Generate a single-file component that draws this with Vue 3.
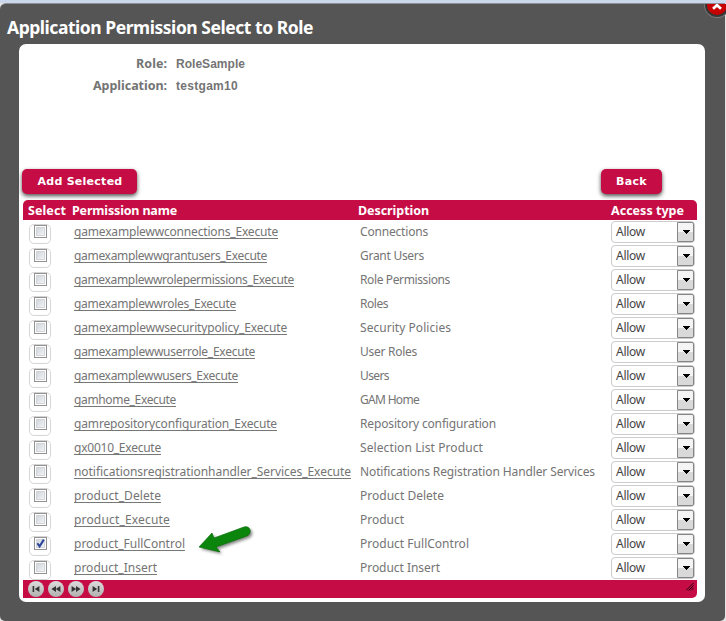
<script setup>
import { ref } from 'vue'

const raw = [
  ['gamexamplewwconnections_Execute', 204, 'Connections', 68],
  ['gamexamplewwgrantusers_Execute', 193, 'Grant Users', 64],
  ['gamexamplewwrolepermissions_Execute', 220, 'Role Permissions', 90],
  ['gamexamplewwroles_Execute', 162, 'Roles', 28],
  ['gamexamplewwsecuritypolicy_Execute', 213, 'Security Policies', 91],
  ['gamexamplewwuserrole_Execute', 181, 'User Roles', 57],
  ['gamexamplewwusers_Execute', 164, 'Users', 29],
  ['gamhome_Execute', 102, 'GAM Home', 59],
  ['gamrepositoryconfiguration_Execute', 203, 'Repository configuration', 136],
  ['gx0010_Execute', 87, 'Selection List Product', 123],
  ['notificationsregistrationhandler_Services_Execute', 277, 'Notifications Registration Handler Services', 235],
  ['product_Delete', 87, 'Product Delete', 84],
  ['product_Execute', 96, 'Product', 44],
  ['product_FullControl', 111, 'Product FullControl', 109],
  ['product_Insert', 83, 'Product Insert', 80],
]
const rows = ref(raw.map(([name, nameWidth, desc, descWidth], i) => ({
  name, nameWidth, desc, descWidth, checked: i === 13,
})))

// Tracks a label out (or in) so that it fills the given width.
const vFit = {
  mounted(el, { value }) {
    const natural = el.getBoundingClientRect().width
    el.style.letterSpacing = `${(value - natural) / el.textContent.length}px`
  },
}

const pager = [
  'M4.6 5h1.6v6H4.6z M11.4 5v6L6.8 8z',
  'M8 5v6L3.4 8z M12.4 5v6L7.8 8z',
  'M3.6 5v6L8.2 8z M8 5v6l4.6-3z',
  'M4.6 5v6l4.6-3z M9.8 5h1.6v6H9.8z',
]
</script>

<template>
  <div class="page">
    <div class="dialog">
      <h1><span v-fit="306">Application Permission Select to Role</span></h1>
      <div class="panel">
        <dl>
          <dt><span v-fit="31">Role:</span></dt>
          <dd><span v-fit="69">RoleSample</span></dd>
          <dt><span v-fit="74">Application:</span></dt>
          <dd><span v-fit="62">testgam10</span></dd>
        </dl>
        <div class="actions">
          <button class="add"><span v-fit="85">Add Selected</span></button>
          <button class="back"><span v-fit="31">Back</span></button>
        </div>
        <div class="grid">
          <div class="row head">
            <div class="select-head"><span v-fit="38">Select</span></div>
            <div class="name-head"><span v-fit="105">Permission name</span></div>
            <div class="desc-head"><span v-fit="71">Description</span></div>
            <div><span v-fit="73">Access type</span></div>
          </div>
          <div v-for="r in rows" :key="r.name" class="row item">
            <div class="check-cell">
              <span class="check">
                <span class="box" @click="r.checked = !r.checked">
                  <svg v-if="r.checked" viewBox="0 0 13 13"><path d="M3.4 6.2 5.6 9.4 9.8 2.6" /></svg>
                </span>
              </span>
            </div>
            <div><a v-fit="r.nameWidth">{{ r.name }}</a></div>
            <div class="desc"><span v-fit="r.descWidth">{{ r.desc }}</span></div>
            <div>
              <div class="combo">
                <span v-fit="29">Allow</span>
                <i><svg viewBox="0 0 8 4"><path d="M0 0h8L4 4z" /></svg></i>
              </div>
            </div>
          </div>
          <div class="pager">
            <svg v-for="d in pager" :key="d" class="page-btn" viewBox="0 0 16 16">
              <defs>
                <linearGradient id="silver" x1="0" y1="0" x2="0" y2="1">
                  <stop offset="0" stop-color="#ddd" /><stop offset="1" stop-color="#b0b0b0" />
                </linearGradient>
              </defs>
              <circle cx="8" cy="8" r="8" fill="url(#silver)" />
              <path :d="d" fill="#333" />
            </svg>
            <svg class="grip" viewBox="0 0 8 8"><path d="M0 7.5 7.5 0M2.5 7.5l5-5M5 7.5 7.5 5" /></svg>
          </div>
        </div>
      </div>
    </div>
    <svg class="close" viewBox="0 0 23 14">
      <circle cx="14" cy="1" r="13" fill="#777" />
      <circle cx="14" cy="1" r="12" fill="#353535" />
      <circle cx="14" cy="1" r="10" fill="#c60000" />
      <path d="M10 4.7 14 1.2l4 3.5M14 1.2V-1" />
    </svg>
    <svg class="arrow" viewBox="0 0 62 36">
      <path class="shadow" d="M4 22 17 8l2 5L49 2c6-2 9 6 3 9L21 22l4 5z" />
      <path class="body" d="M4 22 17 8l2 5L49 2c6-2 9 6 3 9L21 22l4 5z" />
    </svg>
  </div>
</template>

<style>
body { overflow: hidden; background: #e9e9e9; }
</style>

<style scoped>
* { box-sizing: border-box; }
.page {
  position: relative; width: 726px; height: 621px; padding-right: 1px; overflow: hidden;
  border-top: 3px solid #cbd8eb; background: #e4e4e4;
  font: 12px/24px "Noto Sans", sans-serif; color: #747474; white-space: nowrap;
}
.dialog { height: 618px; border-top: 1px solid #8c8f95; border-radius: 6px 0 5px 5px; background: #555; }
h1 { margin: 0; padding: 11px 0 0 7px; height: 40px; font: bold 17.5px/24px "Noto Sans", sans-serif; color: #fff; }
.panel { width: 686px; height: 558px; margin-left: 19px; padding: 8px 8px 4px 4px; border-radius: 7px; background: #fff; }
dl { display: grid; grid-template-columns: 144px 1fr; grid-auto-rows: 22px; column-gap: 9px; height: 117px; margin: 0; font-weight: bold; font-size: 12.5px; line-height: 23px; align-content: start; }
dt { text-align: right; }
dd { margin: 0; font: bold 12px/22px "Liberation Sans", sans-serif; padding-top: 1px; }
.actions { display: flex; justify-content: space-between; height: 31px; margin-left: -1px; padding-right: 35px; }
button {
  height: 25px; padding: 1px 0 0; border: 0; border-radius: 5px; background: #c60c44; color: #fff;
  font: bold 11px/24px "DejaVu Sans", sans-serif; box-shadow: 0 2px 4px rgba(0, 0, 0, .7);
}
.add { width: 115px; padding-left: 1px; }
.back { width: 61px; }
.row { display: grid; grid-template-columns: 51px 286px 251px 86px; height: 24px; }
.head { height: 20px; border-radius: 5px 5px 0 0; background: #c60c44; color: #fff; font-weight: bold; font-size: 12.5px; line-height: 22px; }
.select-head { padding-left: 5px; }
.name-head { margin-left: -2px; }
.desc-head { margin-left: -2px; }
a { display: inline-block; height: 19px; border-bottom: 1px solid #777; }
.check-cell { padding: 4px 0 0 6px; }
.check { display: block; width: 22px; height: 20px; padding: 0 0 0 4px; border: 1px solid #d5d5d5; border-radius: 5px; }
.box { display: block; width: 13px; height: 13px; border: 1px solid #929292; background: linear-gradient(135deg, #c9ced4, #fafafa); box-shadow: inset 0 0 0 1px #fff, inset 0 0 0 2px #d2d5d9; }
.box svg { display: block; width: 13px; height: 13px; margin: -1px; }
.box path { fill: none; stroke: #2b459a; stroke-width: 2; }
.combo { display: flex; justify-content: space-between; width: 84px; height: 22px; margin-top: 1px; padding: 0 0 0 4px; border: 1px solid #ccc; border-radius: 4px; line-height: 20px; color: #444; }
.combo i { display: flex; align-items: center; justify-content: center; width: 17px; height: 20px; border: 1px solid #858585; border-radius: 0 2px 2px 0; background: linear-gradient(#f5f5f5 50%, #d9d9d9 50%); }
.combo svg { width: 8px; height: 4px; fill: #000; shape-rendering: crispEdges; }
.pager { display: flex; gap: 4px; height: 18px; padding: 1px 3px 0 5px; border-radius: 0 0 5px 0; background: #c60c44; }
.page-btn { width: 16px; height: 16px; }
.grip { width: 8px; height: 8px; margin: 2px 0 0 auto; stroke: #20050e; stroke-width: 1; }
.close { position: absolute; left: 703px; top: 1px; width: 23px; height: 14px; }
.close path { fill: none; stroke: #fff; stroke-width: 2.8; }
.arrow { position: absolute; left: 195px; top: 521px; width: 62px; height: 36px; overflow: visible; }
.arrow .body { fill: #0c850c; stroke: #08700a; stroke-width: .7; }
.arrow path { transform: translate(0, 1px); }
.arrow .shadow { fill: #444; opacity: .65; transform: translate(2px, 3px); filter: blur(1.5px); }
</style>
